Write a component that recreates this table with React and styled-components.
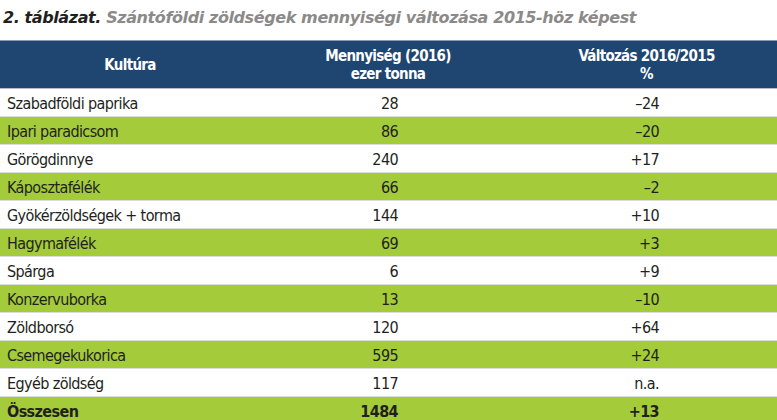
import React from "react";
import styled, { createGlobalStyle } from "styled-components";

const Global = createGlobalStyle`
  html, body { margin: 0; padding: 0; background: #ffffff; }
  body { width: 777px; overflow: hidden; }
`;

const Page = styled.div`
  width: 777px;
  height: 420px;
  overflow: hidden;
  background: #fff;
`;

const Title = styled.div`
  height: 40px;
  box-sizing: border-box;
  padding: 8px 0 0 3px;
  font-family: "DejaVu Sans", sans-serif;
  font-style: italic;
  font-weight: 700;
  font-size: 16px;
  letter-spacing: -0.4px;
  line-height: 20px;
  color: #8c8a89;
  white-space: nowrap;
`;

const TitleLabel = styled.span`
  color: #231f20;
`;

const Grid = styled.div`
  display: grid;
  grid-template-columns: 260px 256px 261px;
  font-family: "DejaVu Sans Condensed", "DejaVu Sans", sans-serif;
`;

const HeadCell = styled.div`
  height: 47px;
  background: #1f4670;
  border-top: 1px solid #8c9bb0;
  border-bottom: 1px solid #b9bcc0;
  display: flex;
  align-items: center;
  justify-content: center;
  text-align: center;
  color: #ffffff;
  font-weight: 700;
  font-size: 15px;
  letter-spacing: -0.7px;
  line-height: 18px;
`;

const Cell = styled.div`
  height: 27px;
  border-bottom: 1px solid #dcdcdc;
  background: ${(p) => (p.$green ? "#a3cb3a" : "#ffffff")};
  display: flex;
  align-items: center;
  justify-content: ${(p) => (p.$num ? "flex-end" : "flex-start")};
  padding: ${(p) => (p.$num ? "1px 118px 0 0" : "1px 0 0 7px")};
  box-sizing: border-box;
  height: 28px;
  color: #231f20;
  font-size: 16px;
  letter-spacing: -0.6px;
  font-weight: ${(p) => (p.$bold ? 700 : 400)};
  white-space: nowrap;
`;

const rows = [
  ["Szabadföldi paprika", "28", "–24"],
  ["Ipari paradicsom", "86", "–20"],
  ["Görögdinnye", "240", "+17"],
  ["Káposztafélék", "66", "–2"],
  ["Gyökérzöldségek + torma", "144", "+10"],
  ["Hagymafélék", "69", "+3"],
  ["Spárga", "6", "+9"],
  ["Konzervuborka", "13", "–10"],
  ["Zöldborsó", "120", "+64"],
  ["Csemegekukorica", "595", "+24"],
  ["Egyéb zöldség", "117", "n.a."],
  ["Összesen", "1484", "+13"],
];

export default function App() {
  return (
    <Page>
      <Global />
      <Title>
        <TitleLabel>2. táblázat.</TitleLabel> Szántóföldi zöldségek mennyiségi változása 2015-höz képest
      </Title>
      <Grid>
        <HeadCell>Kultúra</HeadCell>
        <HeadCell>
          Mennyiség (2016)
          <br />
          ezer tonna
        </HeadCell>
        <HeadCell>
          Változás 2016/2015
          <br />%
        </HeadCell>
        {rows.map((r, i) => {
          const green = i % 2 === 1;
          const bold = i === rows.length - 1;
          return (
            <React.Fragment key={r[0]}>
              <Cell $green={green} $bold={bold}>{r[0]}</Cell>
              <Cell $green={green} $bold={bold} $num>{r[1]}</Cell>
              <Cell $green={green} $bold={bold} $num>{r[2]}</Cell>
            </React.Fragment>
          );
        })}
      </Grid>
    </Page>
  );
}
